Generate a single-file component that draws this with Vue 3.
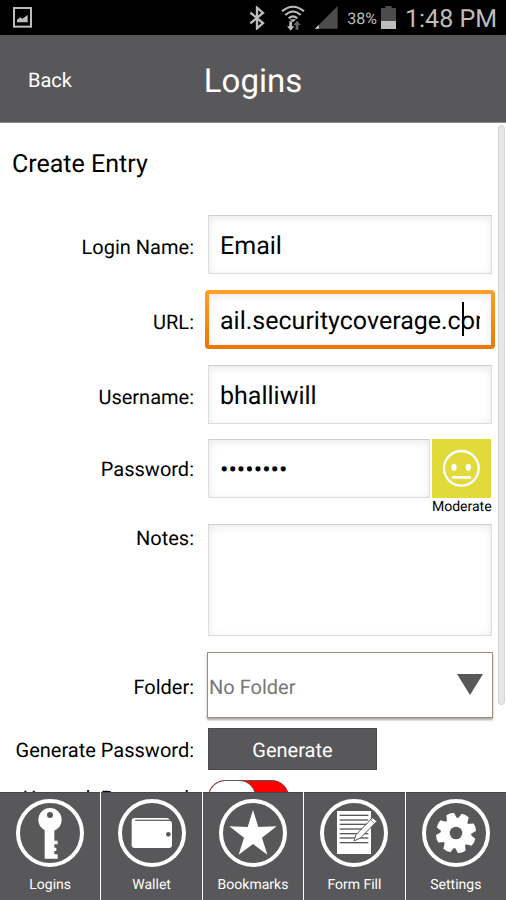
<script setup>
import { ref } from 'vue'

const loginName = ref('Email')
const url = ref('ail.securitycoverage.com')
const username = ref('bhalliwill')
const password = ref('password')
const notes = ref('')
const folder = ref('No Folder')
const unmask = ref(false)

const gearTeeth = [0, 45, 90, 135, 180, 225, 270, 315]
const paperLines = [47, 61, 74, 88, 102, 115, 129]
const tabs = ['Logins', 'Wallet', 'Bookmarks', 'Form Fill', 'Settings']
</script>

<template>
  <div class="screen">
    <div class="status">
      <svg class="picture" viewBox="0 0 57 63" aria-hidden="true">
        <rect x="3" y="3" width="51" height="56" fill="none" stroke="#bdbdbd" stroke-width="6" />
        <path d="M12 46V39L21 31L28 35L44 24V46Z" fill="#bdbdbd" />
      </svg>
      <div class="indicators">
        <svg class="bluetooth" viewBox="0 0 48 72" aria-hidden="true">
          <path d="M4 20L42 51L24 67V5L42 21L4 52" fill="none" stroke="#bdbdbd" stroke-width="7" />
        </svg>
        <svg class="wifi" viewBox="0 0 72 78" aria-hidden="true">
          <g fill="none" stroke="#bdbdbd" stroke-width="6">
            <path d="M3 19Q36 -9 69 19" />
            <path d="M13 30Q36 9 59 30" />
            <path d="M23 40Q36 28 49 40" />
          </g>
          <path d="M27 43H45L36 52Z" fill="#bdbdbd" />
          <path d="M25 49H33V64H40L29 77L18 64H25Z" fill="#bdbdbd" />
          <path d="M44 74V60H37L48 47L59 60H52V74Z" fill="#666" />
        </svg>
        <svg class="signal" viewBox="0 0 68 68" aria-hidden="true">
          <path d="M67 0V67H0Z" fill="#4c4c4c" />
          <path d="M11 56V67H0Z" fill="#d8d8d8" />
        </svg>
        <span class="percent">38%</span>
        <svg class="battery" viewBox="0 0 45 69" aria-hidden="true">
          <path d="M13 0H32V6H45V46H0V6H13Z" fill="#4c4c4c" />
          <rect y="45" width="45" height="24" fill="#bdbdbd" />
        </svg>
        <span class="time">1:48 PM</span>
      </div>
    </div>

    <header class="header">
      <button type="button" class="back">Back</button>
      <h1>Logins</h1>
    </header>

    <main class="content">
      <h2>Create Entry</h2>
      <form class="form" @submit.prevent>
        <div class="row">
          <label for="login-name">Login Name:</label>
          <input id="login-name" v-model="loginName" class="box" type="text" />
        </div>
        <div class="row">
          <label for="url">URL:</label>
          <div class="active">
            <input id="url" v-model="url" class="box" type="text" />
            <span class="caret"></span>
          </div>
        </div>
        <div class="row">
          <label for="username">Username:</label>
          <input id="username" v-model="username" class="box" type="text" />
        </div>
        <div class="row top">
          <label for="password" class="tall">Password:</label>
          <div class="secret">
            <input id="password" v-model="password" class="box" type="password" />
            <div class="strength">
              <svg class="face" viewBox="0 0 177 177" aria-hidden="true">
                <rect width="177" height="177" fill="#e2d93b" />
                <circle cx="88" cy="88" r="52" fill="none" stroke="#fff" stroke-width="7" />
                <ellipse cx="66" cy="85" rx="8" ry="11" fill="#fff" />
                <ellipse cx="109" cy="85" rx="8" ry="11" fill="#fff" />
                <rect x="60" y="111" width="57" height="8" fill="#fff" />
              </svg>
              <span>Moderate</span>
            </div>
          </div>
        </div>
        <div class="row top notes-row">
          <label for="notes">Notes:</label>
          <textarea id="notes" v-model="notes" class="box notes"></textarea>
        </div>
        <div class="row">
          <label for="folder">Folder:</label>
          <div class="folder">
            <select id="folder" v-model="folder">
              <option>No Folder</option>
            </select>
            <svg viewBox="0 0 26 21" aria-hidden="true"><path d="M0 0H26L13 21Z" fill="#58585a" /></svg>
          </div>
        </div>
        <div class="row close">
          <label for="generate">Generate Password:</label>
          <button id="generate" type="button" class="generate">Generate</button>
        </div>
        <div class="row close">
          <label for="unmask">Unmask Password:</label>
          <input id="unmask" v-model="unmask" class="toggle" type="checkbox" />
        </div>
      </form>
      <div class="scrollbar"></div>
    </main>

    <nav class="tabs">
      <a v-for="tab in tabs" :key="tab" href="#" class="tab">
        <svg viewBox="0 0 204 204" aria-hidden="true">
          <circle cx="102" cy="102" r="96" fill="none" stroke="#fff" stroke-width="12" />
          <g v-if="tab === 'Logins'">
            <circle cx="102" cy="62" r="35" fill="#fff" />
            <path d="M86 90H115V125H125V136H115V146H121V156H115V166H125V179H86Z" fill="#fff" />
            <circle cx="102" cy="48" r="9" fill="#58585a" />
          </g>
          <g v-else-if="tab === 'Wallet'">
            <path d="M50 57H146Q153 57 155 62H52V65H153Q162 65 162 74V138Q162 147 153 147H50Q41 147 41 138V66Q41 57 50 57Z" fill="#fff" />
            <path d="M52 64H154" stroke="#58585a" stroke-width="2" />
            <circle cx="151" cy="106" r="7" fill="#58585a" />
          </g>
          <path
            v-else-if="tab === 'Bookmarks'"
            d="M102 33L118 84L173 82L129 116L145 167L102 135L59 167L75 116L31 82L86 84Z"
            fill="#fff"
          />
          <g v-else-if="tab === 'Form Fill'">
            <rect x="51" y="36" width="102" height="129" fill="#fff" />
            <rect v-for="y in paperLines" :key="y" x="59" :y="y" width="86" height="4" fill="#58585a" />
            <path d="M102 126L108 107L158 56L171 67L121 117Z" fill="#fff" stroke="#58585a" stroke-width="3" />
            <path d="M152 62L164 74" stroke="#58585a" stroke-width="2" />
          </g>
          <g v-else>
            <circle cx="102" cy="102" r="46" fill="#fff" />
            <path
              v-for="angle in gearTeeth"
              :key="angle"
              d="M86 62L90 43Q102 39 114 43L118 62Z"
              fill="#fff"
              :transform="`rotate(${angle - 17} 102 102)`"
            />
            <circle cx="102" cy="102" r="19" fill="#58585a" />
          </g>
        </svg>
        <span>{{ tab }}</span>
      </a>
    </nav>
  </div>
</template>

<style>
body {
  margin: 0;
  background: #fff;
}
</style>

<style scoped>
.screen {
  display: flex;
  flex-direction: column;
  height: 100vh;
  overflow: hidden;
  font-family: Roboto, sans-serif;
  text-rendering: geometricPrecision;
  color: #000;
}
.screen * {
  box-sizing: border-box;
}
button,
input,
select,
textarea {
  font-family: inherit;
  text-rendering: inherit;
  margin: 0;
}
.status {
  flex: none;
  display: flex;
  align-items: center;
  justify-content: space-between;
  height: 35px;
  padding: 0 9px 0 13px;
  background: #000;
  color: #bdbdbd;
}
.picture {
  width: 19px;
  height: 21px;
}
.indicators {
  display: flex;
  align-items: center;
}
.bluetooth {
  width: 16px;
  height: 24px;
  margin-right: 16px;
}
.wifi {
  width: 24px;
  height: 26px;
  margin-right: 10px;
}
.signal {
  width: 23px;
  height: 23px;
  margin-right: 9px;
}
.percent {
  padding-top: 2px;
  font-size: 16px;
  margin-right: 4px;
}
.battery {
  width: 15px;
  height: 23px;
  margin-right: 9px;
}
.time {
  padding-top: 4px;
  font-size: 25px;
  line-height: 30px;
}
.header {
  flex: none;
  display: grid;
  grid-template-columns: 1fr auto 1fr;
  align-items: center;
  height: 88px;
  padding: 2px 28px 0;
  background: #58585a;
  border-bottom: 1px solid #8a8a8c;
  color: #fff;
}
.back {
  justify-self: start;
  padding: 0;
  border: 0;
  background: none;
  color: inherit;
  font-size: 20px;
}
h1 {
  margin: 0;
  padding-top: 4px;
  font-size: 33px;
  line-height: 40px;
  font-weight: 400;
}
.content {
  position: relative;
  flex: 1;
  min-height: 0;
  overflow: hidden;
  padding: 26px 14px 0 12px;
}
h2 {
  margin: 0 0 34px;
  font-size: 25px;
  line-height: 32px;
  font-weight: 400;
}
.form {
  display: flex;
  flex-direction: column;
}
.row {
  display: grid;
  grid-template-columns: 182px minmax(0, 1fr);
  column-gap: 14px;
  align-items: center;
  margin-top: 16px;
}
.row:first-child {
  margin-top: 0;
}
.row.top {
  align-items: start;
  margin-top: 15px;
}
.row.notes-row {
  margin-top: 8px;
}
.row.close {
  margin-top: 10px;
}
label {
  padding-top: 4px;
  font-size: 20px;
  line-height: 24px;
  text-align: right;
  white-space: nowrap;
}
label.tall {
  padding-top: 18px;
}
.notes-row label {
  padding-top: 2px;
}
.row.close label {
  padding-top: 2px;
}
.box {
  display: block;
  width: 100%;
  min-width: 0;
  height: 59px;
  padding: 4px 11px 0;
  border: 1px solid #dcdcdc;
  border-top-color: #cecece;
  border-radius: 0;
  background: #fff;
  box-shadow: inset 0 2px 8px rgba(0, 0, 0, 0.09);
  color: #000;
  font-size: 25px;
  outline: none;
}
.notes {
  height: 112px;
  resize: none;
}
.active {
  position: relative;
}
.active::before {
  content: '';
  position: absolute;
  inset: 0 -3px;
  border-radius: 4px;
  background: linear-gradient(#ffa02a, #ec7600);
}
.active .box {
  position: relative;
  border: solid transparent;
  border-width: 4px 1px;
  background-clip: padding-box;
}
.caret {
  position: absolute;
  left: 254px;
  top: 12px;
  width: 2px;
  height: 34px;
  background: #000;
}
.secret {
  display: grid;
  grid-template-columns: minmax(0, 1fr) 60px;
  column-gap: 2px;
  align-items: start;
}
.strength {
  display: flex;
  flex-direction: column;
  font-size: 14px;
  line-height: 18px;
}
.face {
  width: 59px;
  height: 59px;
}
.folder {
  position: relative;
  margin: 0 -1px;
}
.folder select {
  display: block;
  width: 100%;
  height: 66px;
  padding: 4px 1px 0;
  border: 1px solid #9b9079;
  border-radius: 0;
  appearance: none;
  background: #fff;
  box-shadow: 0 2px 2px rgba(0, 0, 0, 0.35);
  color: #777;
  font-size: 20px;
}
.folder svg {
  position: absolute;
  right: 10px;
  top: 22px;
  width: 26px;
  height: 21px;
  pointer-events: none;
}
.generate {
  justify-self: start;
  width: 169px;
  height: 42px;
  padding: 2px 0 0;
  border: 1px solid #4a4a4c;
  background: #58585a;
  color: #fff;
  font-size: 20px;
}
.toggle {
  justify-self: start;
  position: relative;
  width: 81px;
  height: 34px;
  appearance: none;
  border: 1px solid #58585a;
  border-radius: 17px;
  background: #f00;
  overflow: hidden;
}
.toggle::before {
  content: '';
  display: block;
  width: 46px;
  height: 32px;
  border-right: 1px solid #58585a;
  border-radius: 16px;
  background: #fff;
}
.toggle:checked::before {
  margin-left: auto;
}
.scrollbar {
  position: absolute;
  top: 2px;
  right: 1px;
  width: 7px;
  height: 580px;
  border: 1px solid #d4d4d4;
  border-radius: 4px;
  background: #e6e6e6;
}
.tabs {
  flex: none;
  display: grid;
  grid-template-columns: repeat(5, minmax(0, 1fr));
  column-gap: 1px;
  height: 108px;
  background: #fff;
}
.tab {
  display: flex;
  flex-direction: column;
  align-items: center;
  padding-top: 6px;
  border-top: 1px solid #444446;
  background: #58585a;
  color: #fff;
  font-size: 14px;
  line-height: 18px;
  text-decoration: none;
}
.tab svg {
  width: 68px;
  height: 68px;
  margin-bottom: 9px;
}
</style>
